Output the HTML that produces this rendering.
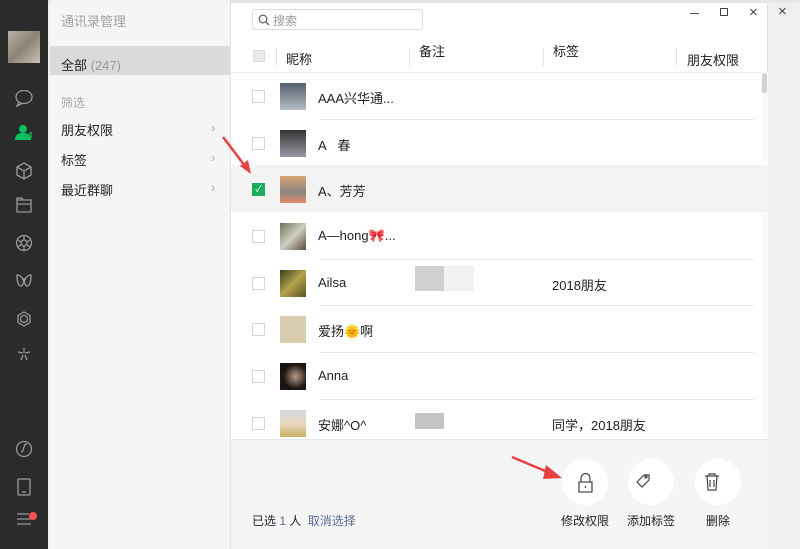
<!DOCTYPE html>
<html><head><meta charset="utf-8"><style>
*{margin:0;padding:0;box-sizing:border-box}
body{width:800px;height:549px;overflow:hidden;background:#efefef;font-family:"Liberation Sans","Noto Sans CJK SC",sans-serif;position:relative;font-size:13px;color:#222}
.a{position:absolute}
#side{left:0;top:0;width:48px;height:549px;background:#2b2b2b}
#mid{left:50px;top:0;width:181px;height:549px;background:#f5f5f5;border-right:1px solid #e4e4e4}
#dlg{left:231px;top:3px;width:537px;height:546px;background:#fff;border-right:1px solid #ddd}
.row{position:absolute;left:0;width:530px;height:47px}
.cb{position:absolute;left:21px;width:13px;height:13px;border:1px solid #d6d6d6;background:#fff}
.av{position:absolute;left:49px;width:26px;height:27px}
.nm{position:absolute;left:87px;font-size:13px}
.ln{position:absolute;left:89px;width:434px;height:1px;background:#e8e8e8}
.circ{position:absolute;width:46px;height:46px;border-radius:50%;background:#fff}
.lbl{position:absolute;font-size:12px;color:#222;width:70px;text-align:center}
.chev{position:absolute;left:161px;color:#aaa}
</style></head><body>
<div class="a" style="left:48px;top:0;width:752px;height:3px;background:#e6e6e6"></div>
<div id="side" class="a">
 <div class="a" style="left:8px;top:31px;width:32px;height:32px;background:linear-gradient(135deg,#b8b0a4,#8d8478 50%,#c9c1b5);"></div>
 <svg class="a" style="left:0;top:80px" width="48" height="300" fill="none" stroke="#9a9a9a" stroke-width="1.3">
  <ellipse cx="24" cy="17" rx="8" ry="6.5"/><path d="M19 22l-2 4 5-2.5"/>
  <circle cx="23" cy="49" r="4" fill="#07c160" stroke="none"/><path d="M15 60c0-6 4-7 8-7s8 1 8 7z" fill="#07c160" stroke="none"/><path d="M29 53h3M29 55h3M29 57h3" stroke="#07c160"/>
  <path d="M24 83l7 4v8l-7 4-7-4v-8zM17 87l7 4 7-4M24 91v8"/>
  <path d="M17 120h14v12H17zM17 124h14M17 120v-2h5l1 2"/>
  <circle cx="24" cy="163" r="7.5"/><circle cx="24" cy="163" r="3"/><path d="M24 156v4M30 160l-3 2M30 167l-3-2M24 170v-4M18 167l3-2M18 160l3 2"/>
  <path d="M17 195c0 8 2 11 4 11s3-5 3-8c0 3 1 8 3 8s4-3 4-11c-3 0-6 3-7 7-1-4-4-7-7-7z"/>
  <path d="M24 232l6 3.5v7L24 246l-6-3.5v-7z"/><circle cx="24" cy="239" r="3.5"/>
  <path d="M24 268v5M18 272l5 1M30 272l-5 1M21 280l2-5M27 280l-2-5"/>
 </svg>
 <svg class="a" style="left:0;top:430px" width="48" height="110" fill="none" stroke="#9a9a9a" stroke-width="1.3">
  <circle cx="24" cy="19" r="7.5"/><path d="M21 22c2 0 2-2 3-5s1-3 3-3"/>
  <rect x="18" y="49" width="12" height="16" rx="1"/><path d="M22 62h4"/>
  <path d="M17 84h12M17 89h14M17 94h14"/>
 </svg>
 <div class="a" style="left:29px;top:512px;width:8px;height:8px;border-radius:50%;background:#fa5151"></div>
</div>
<div id="mid" class="a">
 <div class="a" style="left:11px;top:11px;color:#a0a0a0;font-size:13px">通讯录管理</div>
 <div class="a" style="left:0;top:46px;width:180px;height:29px;background:#dadada"></div>
 <div class="a" style="left:11px;top:55px;font-size:13px">全部 <span style="color:#999">(247)</span></div>
 <div class="a" style="left:11px;top:94px;color:#a8a8a8;font-size:12px">筛选</div>
 <div class="a" style="left:11px;top:120px">朋友权限</div><div class="chev" style="top:120px">›</div>
 <div class="a" style="left:11px;top:150px">标签</div><div class="chev" style="top:150px">›</div>
 <div class="a" style="left:11px;top:180px">最近群聊</div><div class="chev" style="top:180px">›</div>
</div>
<div id="dlg" class="a">
 <div class="a" style="left:21px;top:6px;width:171px;height:21px;border:1px solid #ddd;border-radius:3px"></div>
 <svg class="a" style="left:27px;top:11px" width="12" height="12" fill="none" stroke="#666" stroke-width="1.3"><circle cx="5" cy="5" r="3.8"/><path d="M8 8l3 3"/></svg>
 <div class="a" style="left:42px;top:9px;font-size:12px;color:#999">搜索</div>
 <div class="a" style="left:459px;top:10px;width:9px;height:1px;background:#555"></div>
 <div class="a" style="left:489px;top:5px;width:8px;height:8px;border:1px solid #444"></div>
 <div class="a" style="left:518px;top:1px;font-size:15px;color:#444">×</div>
 <div class="a" style="left:22px;top:47px;width:12px;height:12px;background:#e8e8e8;border:1px solid #dcdcdc"></div>
 <div class="a" style="left:45px;top:45px;width:1px;height:18px;background:#e5e5e5"></div>
 <div class="a" style="left:55px;top:46px">昵称</div>
 <div class="a" style="left:178px;top:45px;width:1px;height:18px;background:#e5e5e5"></div>
 <div class="a" style="left:188px;top:38px">备注</div>
 <div class="a" style="left:312px;top:45px;width:1px;height:18px;background:#e5e5e5"></div>
 <div class="a" style="left:322px;top:38px">标签</div>
 <div class="a" style="left:445px;top:45px;width:1px;height:18px;background:#e5e5e5"></div>
 <div class="a" style="left:456px;top:47px">朋友权限</div>
 <div class="a" style="left:0;top:69px;width:537px;height:1px;background:#ececec"></div>
 <div class="a" style="left:530px;top:69px;width:7px;height:368px;background:#fafafa"></div>
 <div class="a" style="left:531px;top:70px;width:5px;height:20px;border-radius:3px;background:#d0d0d0"></div>

 <div class="row" style="top:69px"><div class="cb" style="top:18px"></div><div class="av" style="top:11px;background:linear-gradient(#55606e,#b5bcc4)"></div><div class="nm" style="top:16px">AAA兴华通...</div><div class="ln" style="top:47px"></div></div>
 <div class="row" style="top:116px"><div class="cb" style="top:18px"></div><div class="av" style="top:11px;background:linear-gradient(#333,#9a98a4)"></div><div class="nm" style="top:16px">A&nbsp;&nbsp; 春</div><div class="ln" style="top:47px"></div></div>
 <div class="row" style="top:162px;background:#f3f3f3;width:537px"><div class="cb" style="top:18px;background:#1aad5c;border-color:#1aad5c;color:#fff;font-size:9px;line-height:11px;text-align:center">✓</div><div class="av" style="top:11px;background:linear-gradient(#d9a473,#8b8581 60%,#e58c65)"></div><div class="nm" style="top:16px">A、芳芳</div></div>
 <div class="row" style="top:209px"><div class="cb" style="top:18px"></div><div class="av" style="top:11px;background:linear-gradient(135deg,#6e7050,#cfd0c2 50%,#5b4b3e)"></div><div class="nm" style="top:16px">A—hong<span style="color:#d22">🎀</span>...</div><div class="ln" style="top:47px"></div></div>
 <div class="row" style="top:256px"><div class="cb" style="top:18px"></div><div class="av" style="top:11px;background:linear-gradient(135deg,#3b3a20,#b4a24a,#5a5322)"></div><div class="nm" style="top:16px">Ailsa</div>
  <div class="a" style="left:184px;top:7px;width:29px;height:25px;background:#d0d0d0"></div><div class="a" style="left:213px;top:7px;width:30px;height:25px;background:#f2f2f2"></div>
  <div class="a" style="left:321px;top:16px">2018朋友</div><div class="ln" style="top:46px"></div></div>
 <div class="row" style="top:302px"><div class="cb" style="top:18px"></div><div class="av" style="top:11px;background:#d9cdb0"></div><div class="nm" style="top:16px">爱扬<span style="color:#f0a020">🌞</span>啊</div><div class="ln" style="top:47px"></div></div>
 <div class="row" style="top:349px"><div class="cb" style="top:18px"></div><div class="av" style="top:11px;background:radial-gradient(circle at 60% 50%,#b99a8a,#1a1412 60%)"></div><div class="nm" style="top:16px">Anna</div><div class="ln" style="top:47px"></div></div>
 <div class="row" style="top:396px"><div class="cb" style="top:18px"></div><div class="av" style="top:11px;background:linear-gradient(#cfd8e0,#e9d6bf 50%,#c8b060)"></div><div class="nm" style="top:16px">安娜^O^</div>
  <div class="a" style="left:184px;top:14px;width:29px;height:16px;background:#c4c4c4"></div><div class="a" style="left:321px;top:16px">同学，2018朋友</div></div>

 <div class="a" style="left:0;top:436px;width:537px;height:110px;background:#f5f5f5;border-top:1px solid #e6e6e6"></div>
 <div class="circ" style="left:331px;top:456px"></div>
 <div class="circ" style="left:397px;top:456px"></div>
 <div class="circ" style="left:464px;top:456px"></div>
 <svg class="a" style="left:331px;top:456px" width="180" height="46" fill="none" stroke="#444" stroke-width="1.2">
  <rect x="17" y="23" width="13" height="10"/><path d="M19 23v-4a4.5 4.5 0 0 1 9 0v4M23.5 27v2"/>
  <path d="M79 21l7-7h5v5l-7 7z" transform="translate(-4 2)"/><circle cx="84" cy="18" r="1"/>
  <path d="M143 17h14M147 17v-2h6v2M145 17l1 14h8l1-14M148 21v7M152 21v7"/>
 </svg>
 <div class="lbl" style="left:319px;top:509px">修改权限</div>
 <div class="lbl" style="left:385px;top:509px">添加标签</div>
 <div class="lbl" style="left:452px;top:509px">删除</div>
 <div class="a" style="left:21px;top:509px;font-size:12px">已选 <span style="color:#576b95">1</span> 人 <span style="color:#576b95;margin-left:3px">取消选择</span></div>
</div>
<div class="a" style="left:778px;top:3px;font-size:15px;color:#444">×</div>
<svg class="a" style="left:0;top:0" width="800" height="549">
 <path d="M223 137L244 163L240 166L251 174L248 160L244 163z" fill="#e84040"/><path d="M223 137l22 29" stroke="#e84040" stroke-width="2.5"/>
 <path d="M512 457L550 473" stroke="#e84040" stroke-width="2.5"/><path d="M546 465L562 478L543 479z" fill="#e84040"/>
</svg>
</body></html>
